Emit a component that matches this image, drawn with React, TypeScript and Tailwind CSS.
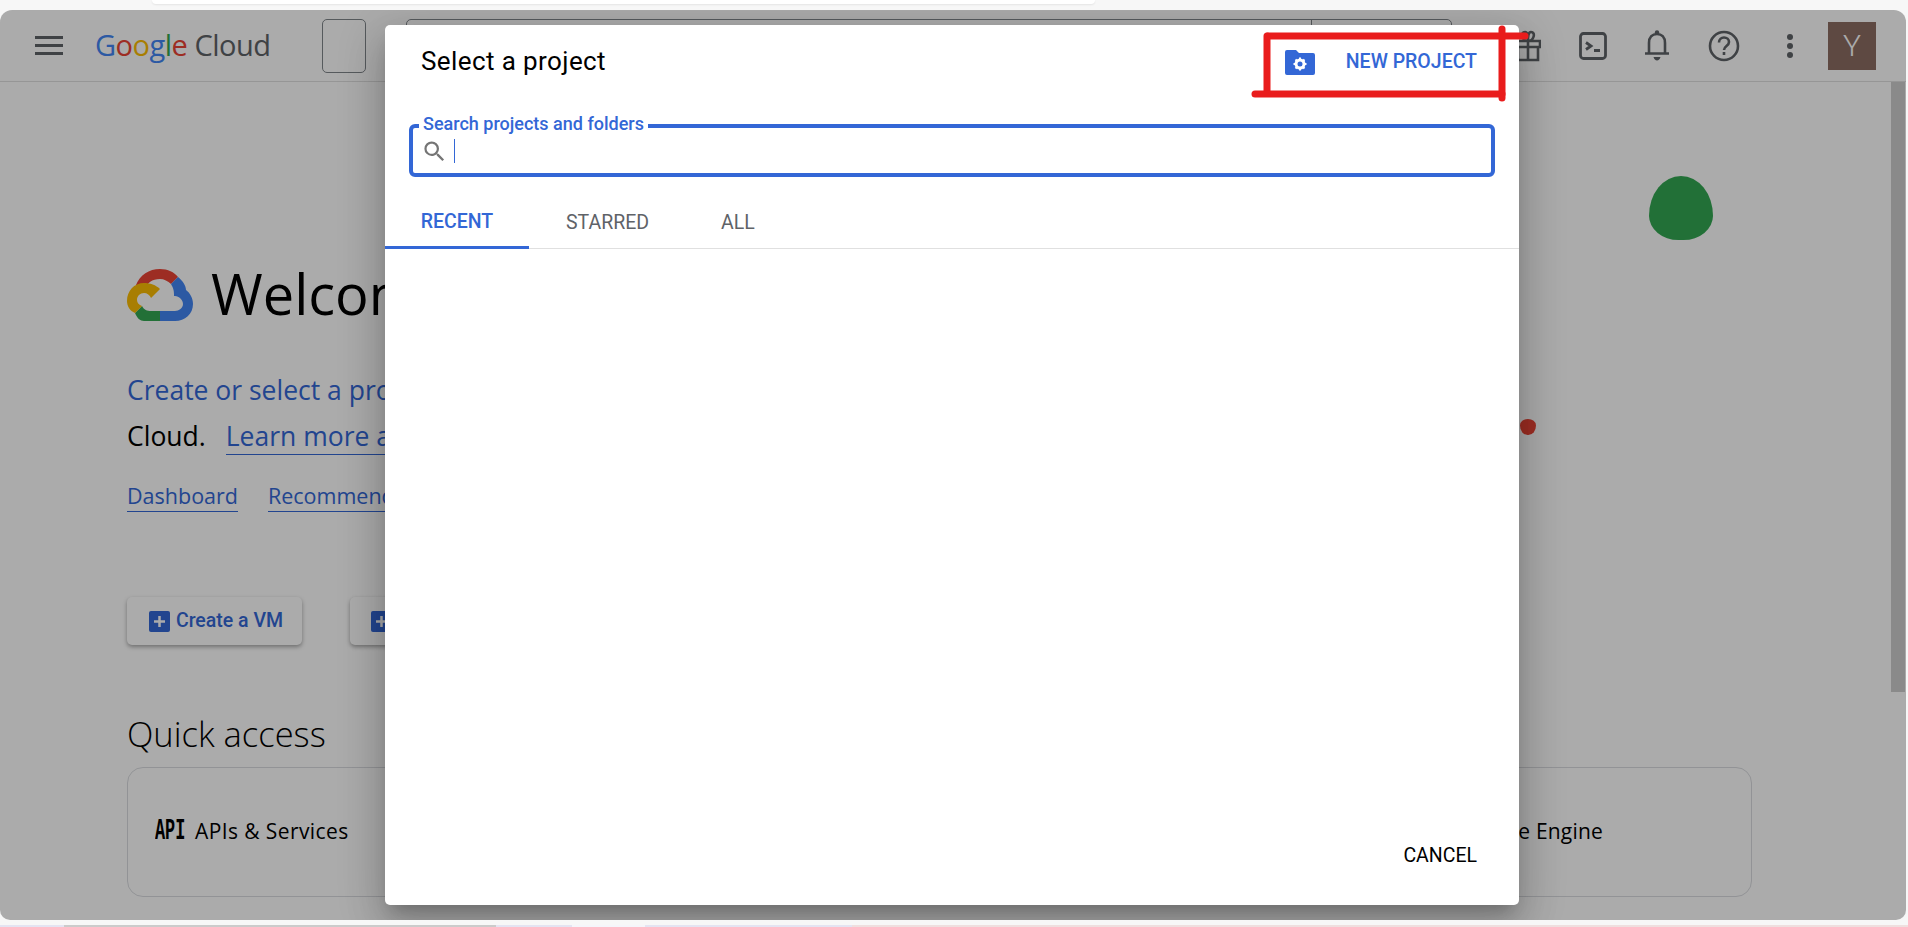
const sans = "font-['Roboto',sans-serif]";
const gs = "font-['Open_Sans',sans-serif]";

function Cloud() {
  return (
    <svg width="66" height="54" viewBox="0 0 66 54" fill="none">
      <path d="M9 18 C13 8 22 2 33 2 C41 2 47 5 51 10 L44 17 C41 14 37 12 33 12 C25 12 20 16 18 22 Z" fill="#ea4335" />
      <path d="M51 10 C56 14 59 19 59 23 C63 26 66 31 66 37 C66 47 58 54 48 54 L33 54 L33 44 L48 44 C52 44 56 41 56 37 C56 33 52 29 48 29 L47 29 C47 22 46 21 44 17 Z" fill="#4285f4" />
      <path d="M8 46 L15 39 C17 43 20 44 24 44 L33 44 L33 54 L17 54 C13 54 10 51 8 46 Z" fill="#34a853" />
      <path d="M17 16 C7 16 0 24 0 34 C0 39 3 44 8 46 L15 39 C12 38 10 36 10 33 C10 29 13 26 17 26 C20 26 23 28 24 31 L33 22 C29 18 23 16 17 16 Z" fill="#fbbc04" />
    </svg>
  );
}

function Plus() {
  return (
    <svg width="21" height="21" viewBox="0 0 21 21">
      <rect width="21" height="21" rx="2" fill="#3367d6" />
      <path d="M10.5 5v11M5 10.5h11" stroke="#fff" strokeWidth="2.5" />
    </svg>
  );
}

function Background() {
  return (
    <div className="flex flex-col h-full bg-white">
      <header className="h-[72px] shrink-0 flex items-center border-b border-[#e0e0e0] pl-[35px] pr-[30px]">
        <svg width="28" height="19" viewBox="0 0 28 19" fill="#5f6368" className="mr-[32px]">
          <rect width="28" height="3" />
          <rect y="8" width="28" height="3" />
          <rect y="16" width="28" height="3" />
        </svg>
        <div className="w-[227px] text-[29px] leading-none tracking-[-0.5px] mt-[-3px] font-['Open_Sans',sans-serif]">
          <span className="text-[#4285f4]">G</span>
          <span className="text-[#ea4335]">o</span>
          <span className="text-[#fbbc04]">o</span>
          <span className="text-[#4285f4]">g</span>
          <span className="text-[#34a853]">l</span>
          <span className="text-[#ea4335]">e</span>
          <span className="text-[#5f6368]"> Cloud</span>
        </div>
        <div className="w-[44px] h-[54px] rounded-[5px] border border-[#80868b] mr-[40px] self-start mt-[9px]" />
        <div className="w-[1046px] h-[54px] rounded-[5px] border border-[#80868b] flex justify-end self-start mt-[9px]">
          <div className="w-[140px] border-l border-[#80868b]" />
        </div>
        <div className="flex-1 flex items-center justify-end text-[#5f6368]">
          <svg width="26" height="32" viewBox="0 0 26 32" fill="none" stroke="currentColor" strokeWidth="2.6" className="mr-[38px]">
            <path d="M1 11h24v6H1zM3 17v13h20V17M13 11v19M13 11c-6 0-8-9-3-9 3 0 3 5 3 9 0-4 0-9 3-9 5 0 3 9-3 9z" />
          </svg>
          <svg width="28" height="28" viewBox="0 0 28 28" fill="none" className="mr-[37px]">
            <rect x="1.5" y="1.5" width="25" height="25" rx="3" stroke="currentColor" strokeWidth="2.8" />
            <path d="M7 10.5l5 3.5-5 3.5" stroke="currentColor" strokeWidth="2.8" />
            <path d="M15 18.5h6" stroke="currentColor" strokeWidth="2.8" />
          </svg>
          <svg width="26" height="31" viewBox="0 0 26 31" fill="none" stroke="currentColor" strokeWidth="2.6" className="mr-[38px]">
            <path d="M1 23.5h24" />
            <path d="M5 23V13c0-6 3.5-9 8-9s8 3 8 9v10" />
            <circle cx="13" cy="2.5" r="2.2" fill="currentColor" stroke="none" />
            <path d="M9.5 27h7c-.5 2-2 3.5-3.5 3.5S10 29 9.5 27z" fill="currentColor" stroke="none" />
          </svg>
          <svg width="32" height="32" viewBox="0 0 32 32" fill="none" stroke="currentColor" strokeWidth="2.6" className="mr-[46px]">
            <circle cx="16" cy="16" r="14" />
            <path d="M11 12.5c0-3 2.2-5 5-5s5 2 5 4.5c0 4-5 4-5 8" />
            <path d="M16 22v3" />
          </svg>
          <svg width="8" height="24" viewBox="0 0 8 24" fill="currentColor" className="mr-[34px]">
            <circle cx="4" cy="3" r="3" />
            <circle cx="4" cy="12" r="3" />
            <circle cx="4" cy="21" r="3" />
          </svg>
          <div className={`w-[48px] h-[48px] bg-[#8d6e63] text-[#fff] text-[30px] font-light flex items-center justify-center ${sans}`}>Y</div>
        </div>
      </header>

      <div className="flex-1 flex min-h-0">
        <main className="flex-1 pl-[127px] pr-[139px] relative overflow-hidden">
          <div className="mt-[185px] flex items-center h-[54px]">
            <Cloud />
            <h1 className={`ml-[18px] text-[56px] text-black leading-none whitespace-nowrap mt-[-3px] ${gs}`}>Welcome</h1>
          </div>
          <p className={`mt-[46px] text-[26.5px] leading-[46px] text-[#3367d6] whitespace-nowrap ${gs}`}>Create or select a project</p>
          <p className={`text-[26.5px] leading-[46px] text-black whitespace-nowrap ${gs}`}>
            Cloud.<a className="ml-[20px] text-[#3367d6] border-b border-[#3367d6]">Learn more about</a>
          </p>
          <div className={`mt-[22px] flex gap-[30px] text-[21.5px] text-[#3367d6] ${gs}`}>
            <a className="border-b border-[#3367d6] leading-[30px]">Dashboard</a>
            <a className="border-b border-[#3367d6] leading-[30px]">Recommendations</a>
          </div>
          <div className="mt-[85px] flex gap-[48px]">
            <button className={`w-[175px] h-[48px] rounded-[5px] bg-white shadow-[0_2px_4px_rgba(0,0,0,0.35)] flex items-center justify-center gap-[6px] pl-[3px] text-[#3367d6] text-[19.5px] font-medium ${sans}`}>
              <Plus />Create a VM
            </button>
            <button className={`w-[175px] h-[48px] rounded-[5px] bg-white shadow-[0_2px_4px_rgba(0,0,0,0.35)] flex items-center pl-[21px] gap-2 text-[#3367d6] text-[19px] font-medium ${sans}`}>
              <Plus />
            </button>
          </div>
          <h2 className={`mt-[67px] text-[34.5px] font-light leading-[44px] text-black ${gs}`}>Quick access</h2>
          <div className="mt-[11px] h-[130px] rounded-[16px] border border-[#dadce0] flex items-center justify-between pl-[27px] pr-[148px]">
            <div className="flex items-center gap-[8px]">
              <span className="w-[32px] h-[24px] block leading-none">
                <span className="inline-block origin-left scale-x-[0.58] font-['Liberation_Mono',monospace] font-bold text-[29px] text-black leading-[24px]">API</span>
              </span>
              <span className={`text-[21px] tracking-[0.4px] text-black ${gs}`}>APIs &amp; Services</span>
            </div>
            <span className={`text-[21px] tracking-[0.2px] text-black ${gs}`}>Compute Engine</span>
          </div>
          <div className="absolute left-[1649px] top-[94px] w-[64px] h-[64px] bg-[#34a853] rounded-[50%_50%_46%_46%/62%_62%_38%_38%]" />
          <div className="absolute left-[1520px] top-[337px] w-[16px] h-[16px] bg-[#ea4335] rounded-[50%_50%_48%_48%/40%_40%_60%_60%]" />
        </main>
        <div className="w-[15px] shrink-0">
          <div className="w-[14px] h-[610px] bg-[#cecece]" />
        </div>
      </div>
    </div>
  );
}

function Dialog() {
  return (
    <div className={`absolute left-[385px] top-[15px] w-[1134px] h-[880px] bg-white rounded-[5px] flex flex-col shadow-[0_11px_15px_-7px_rgba(0,0,0,0.2),0_24px_38px_3px_rgba(0,0,0,0.14),0_9px_46px_8px_rgba(0,0,0,0.12)] ${sans}`}>
      <div className="h-[72px] shrink-0 flex items-center justify-between pl-[36px] pr-[42px]">
        <h2 className="text-[26px] text-black tracking-[0.4px]">Select a project</h2>
        <button className="flex items-center text-[#3367d6] text-[19.5px] font-medium">
          <svg width="30" height="25" viewBox="0 0 30 25" className="mr-[31px] mt-[2px]">
            <path d="M2 0h9l3 3h14a2 2 0 0 1 2 2v18a2 2 0 0 1-2 2H2a2 2 0 0 1-2-2V2a2 2 0 0 1 2-2z" fill="#3367d6" />
            <circle cx="15" cy="14" r="4" fill="none" stroke="#fff" strokeWidth="3" />
            <path d="M15 7.5v3M15 17.5v3M8.5 14h3M18.5 14h3M10.500 9.5l2 2M17.5 16.5l2 2M10.5 18.5l2-2M17.5 11.5l2-2" stroke="#fff" strokeWidth="2" />
          </svg>
          <span className="mt-[2px]">NEW PROJECT</span>
        </button>
      </div>
      <div className="relative mx-[24px] mt-[27px] h-[53px] shrink-0 border-[4px] border-[#3367d6] rounded-[6px] flex items-center pl-[8px]">
        <span className="absolute left-[6px] top-[-14px] bg-white px-[4px] text-[18px] leading-[20px] text-[#3367d6] font-medium">Search projects and folders</span>
        <svg width="27" height="27" viewBox="0 0 24 24" fill="#757575" className="mt-[2px]">
          <path d="M15.5 14h-.79l-.28-.27A6.47 6.47 0 0 0 16 9.5 6.5 6.5 0 1 0 9.5 16c1.61 0 3.09-.59 4.23-1.57l.27.28v.79l5 4.99L20.49 19l-4.99-5zm-6 0C7.01 14 5 11.99 5 9.5S7.01 5 9.5 5 14 7.01 14 9.5 11.99 14 9.5 14z" />
        </svg>
        <span className="ml-[6px] w-px h-[24px] bg-[#3367d6]" />
      </div>
      <div className="mt-[20px] h-[52px] shrink-0 flex border-b border-[#e0e0e0] text-[19.5px]">
        <div className="w-[144px] flex items-center justify-center font-medium text-[#3367d6] border-b-[3px] border-[#3367d6] mb-[-1px]">RECENT</div>
        <div className="ml-[37px] flex items-center text-[#5f6368]">STARRED</div>
        <div className="ml-[72px] flex items-center text-[#5f6368]">ALL</div>
      </div>
      <div className="flex-1" />
      <div className="h-[98px] shrink-0 flex justify-end items-start pt-[34px] pr-[42px]">
        <button className="text-[19.5px] text-black">CANCEL</button>
      </div>
    </div>
  );
}

export default function App() {
  return (
    <div className="relative w-[1908px] h-[927px] overflow-hidden bg-[#f7f7f7] flex flex-col">
      <div className="h-[4px] ml-[152px] w-[943px] bg-white rounded-b-[12px] shrink-0 shadow-[0_1px_2px_rgba(0,0,0,0.08)]" />
      <div className="h-[6px] shrink-0" />
      <div className="relative h-[910px] shrink-0 w-[1906px] rounded-t-[12px] rounded-b-[10px] overflow-hidden">
        <Background />
        <div className="absolute inset-0 bg-black/[0.33]" />
        <Dialog />
      </div>
      <div className="h-[5px] shrink-0" />
      <div className="flex-1 flex">
        <div className="w-[64px] bg-[#e4e4f2]" />
        <div className="w-[432px] bg-[#cbcbcb]" />
        <div className="w-[76px] bg-[#e4e4f2]" />
        <div className="w-[73px] bg-[#f5f5fa]" />
        <div className="w-[207px] bg-[#e4e4f2]" />
        <div className="flex-1 bg-[#efdfdf]" />
      </div>
      <svg className="absolute left-[1250px] top-[25px]" width="285" height="80" viewBox="0 0 285 80" fill="none" stroke="#e91c1c" strokeWidth="7" strokeLinecap="round">
        <path d="M18 11H275" />
        <path d="M17 11V68" />
        <path d="M5 69H252" />
        <path d="M252 4V73" />
      </svg>
    </div>
  );
}
